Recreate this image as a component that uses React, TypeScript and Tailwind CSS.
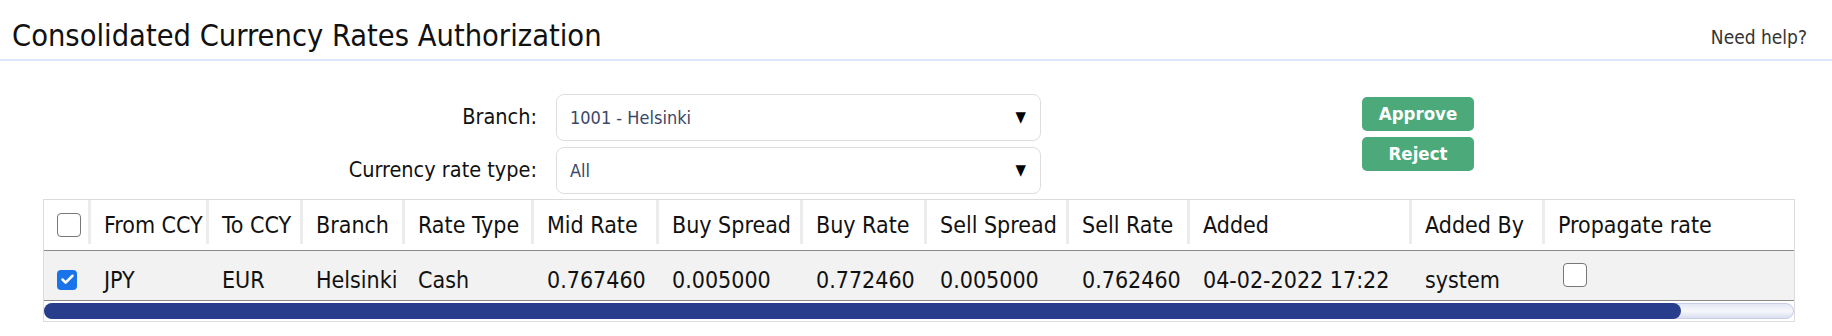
import { Check } from "lucide-react";

const font = { fontFamily: '"Liberation Sans Narrow", "DejaVu Sans Condensed", Roboto, sans-serif' };

const columns = [
  { label: "", w: "w-[47px]" },
  { label: "From CCY", w: "w-[118px]" },
  { label: "To CCY", w: "w-[94px]" },
  { label: "Branch", w: "w-[102px]" },
  { label: "Rate Type", w: "w-[129px]" },
  { label: "Mid Rate", w: "w-[125px]" },
  { label: "Buy Spread", w: "w-[144px]" },
  { label: "Buy Rate", w: "w-[124px]" },
  { label: "Sell Spread", w: "w-[142px]" },
  { label: "Sell Rate", w: "w-[121px]" },
  { label: "Added", w: "w-[222px]" },
  { label: "Added By", w: "w-[133px]" },
  { label: "Propagate rate", w: "w-[251px]" },
];

const row = ["JPY", "EUR", "Helsinki", "Cash", "0.767460", "0.005000", "0.772460", "0.005000", "0.762460", "04-02-2022 17:22", "system"];

function Select({ value }: { value: string }) {
  return (
    <div className="flex h-[47px] items-center justify-between rounded-[8px] border border-[#dedede] bg-white pl-[13px] pr-[14px]">
      <span className="text-[18px] text-[#3b4868]">{value}</span>
      <span className="text-[15px] leading-none text-black">▼</span>
    </div>
  );
}

function Box({ checked }: { checked?: boolean }) {
  if (checked) {
    return (
      <div className="flex h-[20px] w-[20px] items-center justify-center rounded-[4px] bg-[#1a73e8]">
        <Check className="h-[15px] w-[15px] text-white" strokeWidth={4} />
      </div>
    );
  }
  return <div className="h-[24px] w-[24px] rounded-[4px] border-[1.5px] border-[#777] bg-white" />;
}

export default function App() {
  return (
    <div className="h-[336px] w-[1832px] bg-white text-[#111]" style={font}>
      {/* Header */}
      <div className="flex h-[61px] items-end justify-between border-b-2 border-[#dbe6f8] pl-[12px] pr-[25px]">
        <h1 className="pb-[8px] text-[30.5px] leading-none">Consolidated Currency Rates Authorization</h1>
        <span className="pb-[8px] text-[19px] text-[#333]">Need help?</span>
      </div>

      {/* Filters */}
      <div className="flex pt-[33px]">
        <div className="grid grid-cols-[537px_485px] items-center gap-x-[19px] gap-y-[6px]">
          <label className="text-right text-[21.5px]">Branch:</label>
          <Select value="1001 - Helsinki" />
          <label className="text-right text-[21.5px]">Currency rate type:</label>
          <Select value="All" />
        </div>
        <div className="ml-[321px] flex flex-col gap-[6px] pt-[3px]">
          <button className="h-[34px] w-[112px] rounded-[5px] bg-[#4caa7a] text-[18.5px] font-bold text-white">Approve</button>
          <button className="h-[34px] w-[112px] rounded-[5px] bg-[#4caa7a] text-[18.5px] font-bold text-white">Reject</button>
        </div>
      </div>

      {/* Table */}
      <div className="ml-[43px] mt-[5px] w-[1752px] border border-[#dcdcdc]">
        <div className="flex h-[51px] border-b border-[#8a8a8a]">
          {columns.map((c, i) => (
            <div key={i} className={`${c.w} relative flex shrink-0 items-center overflow-hidden whitespace-nowrap pl-[13px] text-[23px]`}>
              {i === 0 ? <Box /> : c.label}
              {i < columns.length - 1 && <div className="absolute right-0 top-0 h-[44px] w-[3px] bg-[#ececec]" />}
            </div>
          ))}
        </div>
        <div className="flex h-[50px] border-b border-[#8a8a8a] bg-[#f2f2f2]">
          <div className="flex w-[47px] shrink-0 items-center pl-[13px] pt-[8px]">
            <Box checked />
          </div>
          {row.map((v, i) => (
            <div key={i} className={`${columns[i + 1].w} flex shrink-0 items-center whitespace-nowrap pl-[13px] pt-[10px] text-[23px]`}>
              {v}
            </div>
          ))}
          <div className="w-[251px] shrink-0 pl-[18px] pt-[12px]">
            <Box />
          </div>
        </div>
        <div className="relative h-[20px] pt-[2px] pb-[2px]">
          <div className="h-[16px] w-full rounded-full border border-[#c9cde6] bg-gradient-to-b from-[#e4e7f4] via-[#f7f8fc] to-[#d9ddef]" />
          <div className="absolute left-0 top-[2px] h-[16px] w-[1637px] rounded-full bg-[#283d8c]" />
        </div>
      </div>
    </div>
  );
}
